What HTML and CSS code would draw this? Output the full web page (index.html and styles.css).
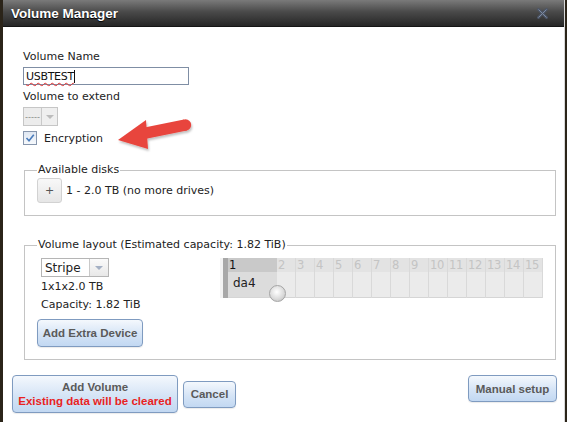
FILE: index.html
```html
<!DOCTYPE html>
<html lang="en">
<head>
  <meta charset="UTF-8" />
  <title>Volume Manager</title>
  <link rel="stylesheet" href="styles.css">
</head>
<body>
  <div class="dialog">
    <div class="titlebar">
      <span class="title">Volume Manager</span>
      <span class="close">
        <svg width="11" height="11" viewBox="0 0 11 11">
          <path d="M1.5 1.5 L9.5 9.5 M9.5 1.5 L1.5 9.5" stroke="#4c5566" stroke-width="2.8" stroke-linecap="square"/>
          <path d="M1.5 1.5 L9.5 9.5 M9.5 1.5 L1.5 9.5" stroke="#7d8aa0" stroke-width="1"/>
        </svg>
      </span>
    </div>

    <div class="content">
      <div class="label">Volume Name</div>
      <div class="text-input"><span class="typed">USBTEST</span><span class="caret"></span></div>

      <div class="label spaced">Volume to extend</div>
      <div class="select disabled">
        <span class="select-value">-----</span>
        <span class="select-arrow"><i></i></span>
      </div>

      <div class="check-row">
        <span class="checkbox">
          <svg width="10" height="10" viewBox="0 0 10 10">
            <path d="M1.5 5 L4 7.8 L8.8 1.8" fill="none" stroke="#4a7cbc" stroke-width="1.6"/>
          </svg>
        </span>
        <span>Encryption</span>
        <svg class="pointer" width="80" height="42" viewBox="0 0 80 42">
          <defs>
            <filter id="drop" x="-20%" y="-20%" width="140%" height="160%">
              <feDropShadow dx="1" dy="2" stdDeviation="1.2" flood-color="#000" flood-opacity="0.25"/>
            </filter>
          </defs>
          <g filter="url(#drop)" fill="#e8453d">
            <path d="M28 13 L70 4.5 L73 15.5 L31 24 Z"/>
            <circle cx="71.5" cy="10" r="5.7"/>
            <path d="M32 5 L4 25 L34 34 Z"/>
          </g>
        </svg>
      </div>

      <fieldset class="group disks">
        <legend>Available disks</legend>
        <div class="disk-row">
          <button class="plus">+</button>
          <span>1 - 2.0 TB (no more drives)</span>
        </div>
      </fieldset>

      <fieldset class="group layout">
        <legend>Volume layout (Estimated capacity: 1.82 TiB)</legend>
        <div class="layout-row">
          <div class="layout-side">
            <div class="select stripe">
              <span class="select-value">Stripe</span>
              <span class="select-arrow"><i></i></span>
            </div>
            <div class="info">1x1x2.0 TB</div>
            <div class="info">Capacity: 1.82 TiB</div>
            <button class="btn extra">Add Extra Device</button>
          </div>

          <div class="disk-grid">
            <div class="grid-strip"></div>
            <div class="grid-cols" id="grid-cols"></div>
            <span class="knob"></span>
          </div>
        </div>
      </fieldset>
    </div>

    <div class="actions">
      <button class="btn big">Add Volume<span class="warn">Existing data will be cleared</span></button>
      <button class="btn cancel">Cancel</button>
      <button class="btn manual">Manual setup</button>
    </div>
  </div>

  <script>
    // build the 15 slot columns of the layout grid
    const cols = document.getElementById("grid-cols");
    for (let i = 1; i <= 15; i++) {
      const col = document.createElement("div");
      col.className = i === 1 ? "col used" : "col";
      col.innerHTML = `<div class="col-head">${i}</div><div class="col-body">${i === 1 ? "da4" : ""}</div>`;
      cols.appendChild(col);
    }
  </script>
</body>
</html>
```

FILE: styles.css
```css
body {
  margin: 0;
  background: #2b2419;
  font-family: "DejaVu Sans", Verdana, sans-serif;
  font-size: 11px;
  color: #222;
  height: 422px;
  overflow: hidden;
}
.dialog {
  margin-left: 3px;
  width: 561px;
  height: 422px;
  background: #fff;
  border-right: 1px solid #d8d8d8;
}
.titlebar {
  height: 27px;
  display: flex;
  align-items: center;
  justify-content: space-between;
  padding: 0 16px 0 8px;
  background: linear-gradient(#7a7a7a, #4a4a4a 45%, #262626);
  border-bottom: 1px solid #151515;
  box-sizing: border-box;
}
.title {
  color: #fff;
  font-family: "Liberation Sans", Arial, sans-serif;
  font-weight: bold;
  font-size: 13.5px;
  text-shadow: 0 1px 1px #000;
}
.close {
  display: flex;
}

.content {
  padding: 23px 8px 0 20px;
}
.label {
  line-height: 14px;
}
.label.spaced {
  margin-top: 5px;
}
.text-input {
  display: flex;
  align-items: center;
  margin-top: 3px;
  width: 166px;
  height: 18px;
  box-sizing: border-box;
  border: 1px solid #7f8ea4;
  padding: 0 2px;
  color: #111;
}
.typed {
  text-decoration: underline wavy #e03030;
  text-decoration-thickness: 1px;
  text-underline-offset: 2px;
  letter-spacing: -0.3px;
}
.caret {
  width: 1px;
  height: 13px;
  background: #111;
}

.select {
  display: flex;
  height: 19px;
  box-sizing: border-box;
  border: 1px solid #b5b5b5;
  background: #fff;
  white-space: nowrap;
  overflow: hidden;
}
.select-value {
  flex: 1;
  display: flex;
  align-items: center;
  padding-left: 3px;
  overflow: hidden;
}
.select-arrow {
  width: 17px;
  flex: none;
  border-left: 1px solid #c9c9c9;
  display: flex;
  align-items: center;
  justify-content: center;
  background: linear-gradient(#fafafa, #e8e8e8);
}
.select-arrow i {
  border-left: 4px solid transparent;
  border-right: 4px solid transparent;
  border-top: 4px solid #a4b0c4;
}
.select.disabled {
  margin-top: 3px;
  width: 35px;
  background: #ececec;
  border-color: #c6c6c6;
  color: #8a8a8a;
}
.select.disabled .select-value {
  padding-left: 1px;
  font-family: "Liberation Sans", Arial, sans-serif;
  font-size: 9px;
}
.select.disabled .select-arrow {
  width: 15px;
  background: #efefef;
}
.select.disabled .select-arrow i {
  border-top-color: #bcbcbc;
}

.check-row {
  margin-top: 5px;
  display: flex;
  align-items: center;
  gap: 7px;
  height: 14px;
  position: relative;
}
.checkbox {
  width: 14px;
  height: 14px;
  box-sizing: border-box;
  border: 1px solid #8796ad;
  background: linear-gradient(#dfe7f2, #f6f9fc);
  display: flex;
  align-items: center;
  justify-content: center;
}
.pointer {
  position: absolute;
  left: 91px;
  top: -16px;
}

.group {
  margin: 0 0 0 1px;
  width: 532px;
  box-sizing: border-box;
  border: 1px solid #c4c4c4;
  padding: 1px 10px 12px 12px;
}
.group legend {
  padding: 0 1px;
  line-height: 14px;
  color: #222;
}
.disks {
  margin-top: 18px;
}
.disk-row {
  display: flex;
  align-items: center;
  gap: 4px;
}
.plus {
  width: 25px;
  height: 25px;
  border: 1px solid #d2d2d2;
  border-radius: 3px;
  background: linear-gradient(#f8f8f8, #e6e6e6);
  color: #555;
  font-family: inherit;
  font-size: 11px;
  padding: 0;
}

.layout {
  margin-top: 22px;
  padding-top: 6px;
}
.layout-row {
  display: flex;
  justify-content: space-between;
  align-items: flex-start;
}
.layout-side {
  display: flex;
  flex-direction: column;
  align-items: flex-start;
}
.select.stripe {
  margin-left: 4px;
  width: 68px;
  height: 19px;
  font-size: 12px;
}
.select.stripe .select-arrow {
  width: 18px;
}
.info {
  margin-left: 4px;
  margin-top: 3px;
  line-height: 14px;
}
.info + .info {
  margin-top: 4px;
}
.btn {
  font-family: "Liberation Sans", Arial, sans-serif;
  font-size: 11.5px;
  font-weight: bold;
  color: #5a5a5a;
  border: 1px solid #7f9bc0;
  border-radius: 4px;
  background: linear-gradient(#f4f8fd, #d5e4f6 55%, #c2d8f2);
  padding: 0;
  white-space: nowrap;
  box-shadow: 0 1px 1px rgba(0, 0, 0, 0.08);
}
.extra {
  margin-top: 7px;
  height: 28px;
  width: 106px;
}

.disk-grid {
  margin-right: 2px;
  display: flex;
  position: relative;
  background: #f3f3f3;
  padding-left: 3px;
}
.grid-strip {
  width: 5px;
  background: #a8a8a8;
}
.grid-cols {
  display: flex;
}
.col {
  width: 19px;
  border-right: 1px solid #d9d9d9;
  box-sizing: border-box;
}
.col.used {
  width: 49px;
  border-right: none;
}
.col-head {
  height: 14px;
  line-height: 14px;
  background: #e3e3e3;
  color: #c4c4c4;
  font-size: 11.5px;
  padding-left: 1px;
  letter-spacing: -0.3px;
}
.col-body {
  height: 26px;
  background: #ebebeb;
  box-sizing: border-box;
  border-bottom: 1px solid #d5d5d5;
}
.col.used .col-head {
  background: #c9c9c9;
  color: #111;
}
.col.used .col-body {
  background: #dcdcdc;
  padding: 4px 0 0 5px;
  font-size: 12px;
  color: #222;
}
.knob {
  position: absolute;
  left: 49px;
  top: 27px;
  width: 15px;
  height: 15px;
  border-radius: 50%;
  border: 1px solid #a5a5a5;
  background: radial-gradient(circle at 45% 40%, #ffffff, #dcdcdc 55%, #b9b9b9);
}

.actions {
  display: flex;
  align-items: center;
  gap: 5px;
  padding: 15px 7px 0 9px;
}
.btn.big {
  width: 166px;
  height: 38px;
  display: flex;
  flex-direction: column;
  align-items: center;
  justify-content: center;
  line-height: 14px;
}
.warn {
  color: #e8231f;
}
.btn.cancel {
  height: 27px;
  width: 53px;
}
.btn.manual {
  margin-left: auto;
  align-self: flex-start;
  height: 27px;
  width: 89px;
}
```
